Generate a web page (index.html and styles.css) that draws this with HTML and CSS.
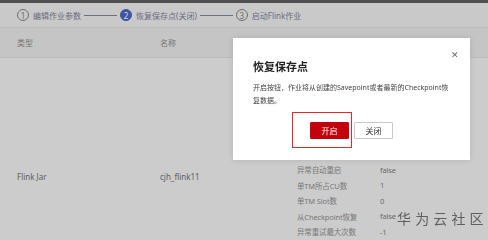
FILE: index.html
```html
<!DOCTYPE html>
<html lang="zh">
<head>
    <meta charset="UTF-8">
    <title>恢复保存点</title>
    <link rel="stylesheet" href="styles.css">
</head>
<body>
    <div class="topbar"></div>

    <div class="steps">
        <div class="step">
            <span class="step-num">1</span>
            <span class="step-text">编辑作业参数</span>
        </div>
        <div class="step-line"></div>
        <div class="step active">
            <span class="step-num">2</span>
            <span class="step-text">恢复保存点(关闭)</span>
        </div>
        <div class="step-line"></div>
        <div class="step">
            <span class="step-num">3</span>
            <span class="step-text">启动Flink作业</span>
        </div>
    </div>

    <div class="table-head">
        <span class="col-type">类型</span>
        <span class="col-name">名称</span>
    </div>

    <div class="table-row">
        <span class="col-type cell">Flink Jar</span>
        <span class="col-name cell">cjh_flink11</span>
        <div class="details">
            <div class="detail"><span class="detail-key">异常自动重启</span><span>false</span></div>
            <div class="detail"><span class="detail-key">单TM所占CU数</span><span>1</span></div>
            <div class="detail"><span class="detail-key">单TM Slot数</span><span>0</span></div>
            <div class="detail"><span class="detail-key">从Checkpoint恢复</span><span>false</span></div>
            <div class="detail"><span class="detail-key">异常重试最大次数</span><span>-1</span></div>
        </div>
    </div>

    <div class="dialog">
        <span class="dialog-close">&#x2715;</span>
        <h2>恢复保存点</h2>
        <p>开启按钮，作业将从创建的Savepoint或者最新的Checkpoint恢复数据。</p>
        <div class="dialog-buttons">
            <button class="btn btn-primary">开启</button>
            <button class="btn">关闭</button>
        </div>
        <div class="highlight"></div>
    </div>

    <div class="watermark">华 为 云 社 区</div>
</body>
</html>
```

FILE: styles.css
```css
body {
    margin: 0;
    padding: 0;
    width: 488px;
    height: 240px;
    overflow: hidden;
    background: #cccccc;
    color: #6b6b6b;
    font-family: "Noto Sans", "Noto Sans CJK SC", sans-serif;
    font-size: 8px;
}

.topbar {
    height: 3px;
    background: #505050;
}

/* steps */
.steps {
    display: flex;
    align-items: center;
    height: 24px;
    padding-left: 17px;
    background: #c9c9c9;
    color: #6a6a80;
}

.step {
    display: flex;
    align-items: center;
    gap: 4px;
}

.step-num {
    width: 10px;
    height: 10px;
    border: 1px solid #707070;
    border-radius: 50%;
    display: flex;
    align-items: center;
    justify-content: center;
    font-size: 8px;
    color: #6e6e6e;
}

.step.active .step-num {
    background: #3d55a3;
    border-color: #3d55a3;
    color: #ddd;
}

.step-line {
    width: 33px;
    height: 1px;
    margin: 0 3px;
    background: #6a6f90;
}

/* table */
.table-head {
    display: flex;
    align-items: center;
    height: 29px;
    padding-left: 17px;
    background: #c5c5c5;
    border-top: 1px solid #bdbdbd;
    border-bottom: 1px solid #bcbcbc;
    color: #737373;
}

.col-type {
    width: 143px;
}

.col-name {
    width: 137px;
}

.table-row {
    display: flex;
    padding-left: 17px;
    color: #5e5e5e;
}

.cell {
    padding-top: 111px;
    line-height: 16px;
}

.details {
    padding-top: 104px;
    color: #6a6a6a;
    font-size: 7.5px;
    letter-spacing: -0.15px;
}

.detail {
    display: flex;
    height: 15.5px;
    align-items: center;
}

.detail-key {
    width: 83px;
    color: #787878;
}

/* dialog */
.dialog {
    position: fixed;
    left: 233px;
    top: 38px;
    width: 197px;
    height: 101px;
    padding: 21px 20px 0 20px;
    background: #fff;
    box-shadow: 0 0 6px rgba(0, 0, 0, 0.12);
    color: #333;
}

.dialog-close {
    position: absolute;
    right: 11px;
    top: 10px;
    font-size: 9px;
    color: #666;
}

.dialog h2 {
    margin: 0;
    font-size: 11px;
    line-height: 16px;
    font-weight: bold;
    color: #222;
}

.dialog p {
    margin: 6px -1px 0 0;
    font-size: 7px;
    line-height: 13px;
    color: #444;
}

.dialog-buttons {
    display: flex;
    justify-content: center;
    gap: 5px;
    margin-top: 15px;
}

.btn {
    width: 39px;
    height: 17px;
    padding: 0;
    border: 1px solid #c8c8c8;
    border-radius: 1px;
    background: #fff;
    font-family: "Noto Sans CJK SC", sans-serif;
    font-size: 8px;
    color: #333;
}

.btn-primary {
    background: #c4000c;
    border-color: #c4000c;
    color: #fff;
}

.highlight {
    position: absolute;
    left: 59px;
    top: 74px;
    width: 58px;
    height: 34px;
    border: 1px solid #e8262b;
}

.watermark {
    position: fixed;
    left: 397px;
    top: 208px;
    font-family: "Noto Sans CJK SC", sans-serif;
    font-size: 14px;
    line-height: 20px;
    color: #5f5f5f;
    letter-spacing: 0.5px;
}
```
